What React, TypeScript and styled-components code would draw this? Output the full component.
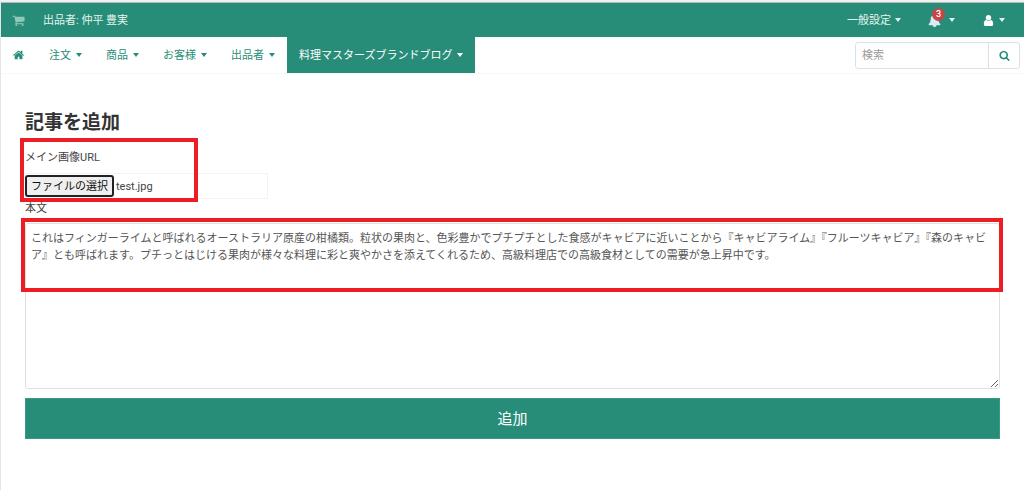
import React from "react";
import styled, { createGlobalStyle } from "styled-components";

const green = "#288d78";
const red = "#ee1c25";

const GlobalStyle = createGlobalStyle`
  *, *::before, *::after { box-sizing: border-box; }
  body {
    margin: 0;
    background: #fff;
    color: #444;
    font-family: Roboto, "Noto Sans CJK JP", sans-serif;
    font-size: 11px;
    line-height: 16px;
  }
  button, input, textarea { font: inherit; color: inherit; }
`;

const Page = styled.div`
  min-height: 100vh;
  border-top: 2px solid #f1f1f1;
  border-left: 1px solid #e6e6e6;
`;

const TopBar = styled.header`
  display: flex;
  align-items: center;
  justify-content: space-between;
  height: 35px;
  padding: 0 19px 0 11px;
  border-top: 1px solid #b5b9b8;
  background: ${green};
  color: #e4f3ef;
`;

const Seller = styled.div`
  display: flex;
  align-items: center;
  gap: 18px;
`;

const Tools = styled.div`
  display: flex;
  align-items: center;
  gap: 27px;
`;

const ToolButton = styled.button`
  display: flex;
  align-items: center;
  gap: 4px;
  padding: 0;
  border: 0;
  background: none;
  cursor: pointer;
`;

const Text = styled.span`
  padding-top: 2px;
`;

const Caret = styled.span`
  border: 3px solid transparent;
  border-top: 4px solid currentColor;
  border-bottom: 0;
`;

const BellHolder = styled.span`
  position: relative;
  display: flex;
  margin-right: 4px;
`;

const Badge = styled.span`
  position: absolute;
  top: -6px;
  left: 4px;
  width: 13px;
  height: 13px;
  border-radius: 50%;
  background: #c64646;
  color: #fff;
  font-size: 9px;
  font-weight: 500;
  line-height: 13px;
  text-align: center;
`;

const Icon = styled.svg<{ $color?: string }>`
  display: block;
  flex: none;
  fill: ${(p) => p.$color ?? "currentColor"};
`;

const NavBar = styled.nav`
  display: flex;
  align-items: stretch;
  justify-content: space-between;
  height: 37px;
  border-bottom: 1px solid #f8f8f8;
`;

const Menu = styled.div`
  display: flex;
`;

const MenuLink = styled.a<{ $active?: boolean }>`
  display: flex;
  align-items: center;
  gap: 5px;
  padding: 0 12px;
  background: ${(p) => (p.$active ? green : "transparent")};
  color: ${(p) => (p.$active ? "#fff" : green)};
  text-decoration: none;
  white-space: nowrap;
`;

const Search = styled.form`
  display: flex;
  align-self: center;
  height: 27px;
  margin-right: 4px;
  border: 1px solid #dce1e6;
  border-radius: 3px;
`;

const SearchInput = styled.input`
  width: 132px;
  padding: 2px 6px 0;
  border: 0;
  background: none;
  &::placeholder { color: #999; }
`;

const SearchButton = styled.button`
  display: grid;
  place-items: center;
  width: 31px;
  padding: 0;
  border: 0;
  border-left: 1px solid #dce1e6;
  background: none;
  color: ${green};
  cursor: pointer;
`;

const Main = styled.main`
  padding: 36px 24px 48px;
`;

const Title = styled.h1`
  margin: 0;
  color: #333;
  font-size: 19px;
  font-weight: 700;
  line-height: 26px;
`;

const Form = styled.form`
  display: flex;
  flex-direction: column;
  align-items: stretch;
`;

const FileField = styled.div`
  position: relative;
  width: 243px;
  padding-top: 14px;
`;

const FieldName = styled.div`
  margin-bottom: 7px;
`;

const FileBox = styled.div`
  display: flex;
  align-items: center;
  gap: 2px;
  height: 26px;
  border: 1px solid #f3f3f3;
  border-left: 0;
`;

const FileInput = styled.input`
  position: absolute;
  width: 1px;
  height: 1px;
  opacity: 0;
`;

const FileLabel = styled.label`
  padding: 2px 4px 0;
  border: 2px solid #222;
  border-radius: 3px;
  background: #efefef;
  color: #111;
  line-height: 16px;
  cursor: pointer;
`;

const BodyLabel = styled.label`
  padding: 2px 0 6px;
`;

const BodyField = styled.div`
  position: relative;
`;

const BodyText = styled.textarea`
  display: block;
  width: 100%;
  height: 166px;
  padding: 6px 5px;
  border: 1px solid #dce1e6;
  border-radius: 3px;
  background: none;
  color: #555;
  line-height: 17px;
  resize: vertical;
`;

const Highlight = styled.div`
  position: absolute;
  border: 4px solid ${red};
  pointer-events: none;
`;

const FileHighlight = styled(Highlight)`
  inset: 2px 70px -3px -5px;
`;

const BodyHighlight = styled(Highlight)`
  inset: -5px -3px auto -4px;
  height: 74px;
`;

const Submit = styled.button`
  height: 41px;
  margin-top: 9px;
  border: 1px solid #3b9884;
  background: ${green};
  color: #fff;
  font-size: 15px;
  cursor: pointer;
`;

const paths = {
  cart: "M704 1536q0 52-38 90t-90 38-90-38-38-90 38-90 90-38 90 38 38 90zm896 0q0 52-38 90t-90 38-90-38-38-90 38-90 90-38 90 38 38 90zm128-1088v512q0 24-16.5 42.5t-40.5 21.5l-1044 122q13 60 13 70 0 16-24 64h920q26 0 45 19t19 45-19 45-45 19h-1024q-26 0-45-19t-19-45q0-11 8-31.5t16-36 21.5-40 15.5-29.5l-177-823h-204q-26 0-45-19t-19-45 19-45 45-19h256q16 0 28.5 6.5t19.5 15.5 13 24.5 8 26 5.5 29.5 4.5 26h1201q26 0 45 19t19 45z",
  home: "M1408 992v480q0 26-19 45t-45 19h-384v-384h-256v384h-384q-26 0-45-19t-19-45v-480q0-1 .5-3t.5-3l575-474 575 474q1 2 1 6zm223-69l-62 74q-8 9-21 11h-3q-13 0-21-7l-692-577-692 577q-12 8-24 7-13-2-21-11l-62-74q-8-10-7-23.5t11-21.5l719-599q32-26 76-26t76 26l244 204v-195q0-14 9-23t23-9h192q14 0 23 9t9 23v408l219 182q10 8 11 21.5t-7 23.5z",
  search: "M1216 832q0-185-131.5-316.5t-316.5-131.5-316.5 131.5-131.5 316.5 131.5 316.5 316.5 131.5 316.5-131.5 131.5-316.5zm512 832q0 52-38 90t-90 38q-54 0-90-38l-343-342q-179 124-399 124-143 0-273.5-55.5t-225-150-150-225-55.5-273.5 55.5-273.5 150-225 225-150 273.5-55.5 273.5 55.5 225 150 150 225 55.5 273.5q0 220-124 399l343 343q37 37 37 90z",
  bell: "M912 1696q0-16-16-16-59 0-101.5-42.5t-42.5-101.5q0-16-16-16t-16 16q0 73 51.5 124.5t124.5 51.5q16 0 16-16zm816-288q0 52-38 90t-90 38h-448q0 106-75 181t-181 75-181-75-75-181h-448q-52 0-90-38t-38-90q50-42 91-88t85-119.5 74.5-158.5 50-206 19.5-260q0-152 117-282.5t307-158.5q-8-19-8-39 0-40 28-68t68-28 68 28 28 68q0 20-8 39 190 28 307 158.5t117 282.5q0 139 19.5 260t50 206 74.5 158.5 85 119.5 91 88z",
  user: "M1536 1399q0 109-62.5 187t-150.5 78h-854q-88 0-150.5-78t-62.5-187q0-85 8.5-160.5t31.5-152 58.5-131 94-89 134.5-34.5q131 128 313 128t313-128q76 0 134.5 34.5t94 89 58.5 131 31.5 152 8.5 160.5zm-256-887q0 159-112.5 271.5t-271.5 112.5-271.5-112.5-112.5-271.5 112.5-271.5 271.5-112.5 271.5 112.5 112.5 271.5z",
};

function Glyph({ name, size = 13, color }: { name: keyof typeof paths; size?: number; color?: string }) {
  return (
    <Icon viewBox="0 0 1792 1792" width={size} height={size} $color={color} aria-hidden="true">
      <path d={paths[name]} />
    </Icon>
  );
}

const menu = ["注文", "商品", "お客様", "出品者"];

const article =
  "これはフィンガーライムと呼ばれるオーストラリア原産の柑橘類。粒状の果肉と、色彩豊かでプチプチとした食感がキャビアに近いことから『キャビアライム』『フルーツキャビア』『森のキャビア』とも呼ばれます。プチっとはじける果肉が様々な料理に彩と爽やかさを添えてくれるため、高級料理店での高級食材としての需要が急上昇中です。";

export default function App() {
  return (
    <Page lang="ja">
      <GlobalStyle />
      <TopBar>
        <Seller>
          <Glyph name="cart" color="#8fc9bb" />
          <Text>出品者: 仲平 豊実</Text>
        </Seller>
        <Tools>
          <ToolButton type="button">
            <Text>一般設定</Text>
            <Caret />
          </ToolButton>
          <ToolButton type="button" aria-label="通知">
            <BellHolder>
              <Glyph name="bell" color="#d9edf7" />
              <Badge>3</Badge>
            </BellHolder>
            <Caret />
          </ToolButton>
          <ToolButton type="button" aria-label="アカウント">
            <Glyph name="user" color="#fff" />
            <Caret />
          </ToolButton>
        </Tools>
      </TopBar>
      <NavBar>
        <Menu>
          <MenuLink href="#" aria-label="ホーム">
            <Glyph name="home" size={12} />
          </MenuLink>
          {menu.map((name) => (
            <MenuLink href="#" key={name}>
              <Text>{name}</Text>
              <Caret />
            </MenuLink>
          ))}
          <MenuLink href="#" $active>
            <Text>料理マスターズブランドブログ</Text>
            <Caret />
          </MenuLink>
        </Menu>
        <Search>
          <SearchInput type="search" placeholder="検索" aria-label="検索" />
          <SearchButton type="submit" aria-label="検索する">
            <Glyph name="search" size={11} />
          </SearchButton>
        </Search>
      </NavBar>
      <Main>
        <Title>記事を追加</Title>
        <Form>
          <FileField>
            <FieldName>メイン画像URL</FieldName>
            <FileBox>
              <FileInput type="file" id="main-image" />
              <FileLabel htmlFor="main-image">ファイルの選択</FileLabel>
              <Text>test.jpg</Text>
            </FileBox>
            <FileHighlight />
          </FileField>
          <BodyLabel htmlFor="body">本文</BodyLabel>
          <BodyField>
            <BodyText id="body" defaultValue={article} spellCheck={false} />
            <BodyHighlight />
          </BodyField>
          <Submit type="button">追加</Submit>
        </Form>
      </Main>
    </Page>
  );
}
